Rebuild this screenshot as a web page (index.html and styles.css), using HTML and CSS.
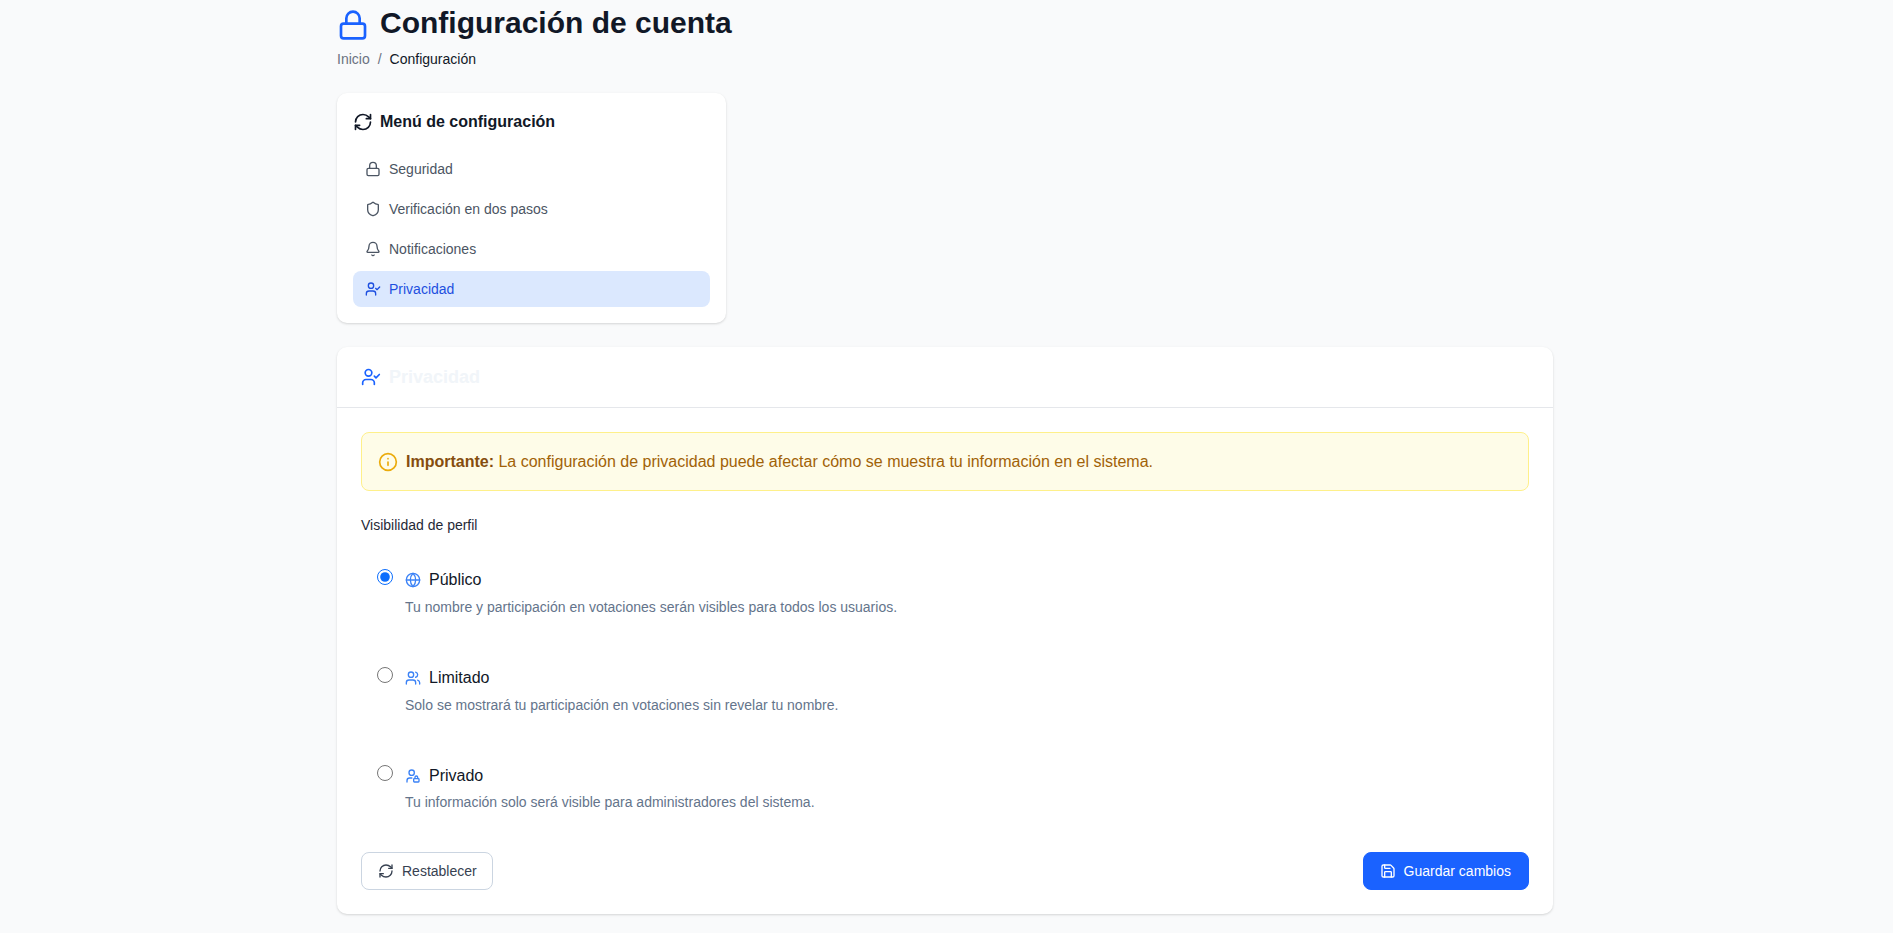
FILE: index.html
```html
<!DOCTYPE html>
<html lang="es">

<head>
    <meta charset="UTF-8">
    <meta name="viewport" content="width=device-width, initial-scale=1.0">
    <title>Configuración de cuenta</title>
    <link rel="stylesheet" href="styles.css">
</head>

<body>

    <div class="page">
        <h1 class="page-title">
            <svg class="icon icon-title" viewBox="0 0 24 24"><rect x="3" y="11" width="18" height="11" rx="2" ry="2"/><path d="M7 11V7a5 5 0 0 1 10 0v4"/></svg>
            Configuración de cuenta
        </h1>
        <div class="breadcrumb">
            <a href="#">Inicio</a>
            <span class="sep">/</span>
            <span class="current">Configuración</span>
        </div>

        <!-- Menu lateral -->
        <div class="card menu-card">
            <h2 class="menu-title">
                <svg class="icon icon-menu" viewBox="0 0 24 24"><path d="M3 12a9 9 0 0 1 9-9 9.75 9.75 0 0 1 6.74 2.74L21 8"/><path d="M21 3v5h-5"/><path d="M21 12a9 9 0 0 1-9 9 9.75 9.75 0 0 1-6.74-2.74L3 16"/><path d="M8 16H3v5"/></svg>
                Menú de configuración
            </h2>
            <nav class="menu-list">
                <a href="#" class="menu-item">
                    <svg class="icon" viewBox="0 0 24 24"><rect x="3" y="11" width="18" height="11" rx="2" ry="2"/><path d="M7 11V7a5 5 0 0 1 10 0v4"/></svg>
                    Seguridad
                </a>
                <a href="#" class="menu-item">
                    <svg class="icon" viewBox="0 0 24 24"><path d="M20 13c0 5-3.5 7.5-7.66 8.95a1 1 0 0 1-.67-.01C7.5 20.5 4 18 4 13V6a1 1 0 0 1 1-1c2 0 4.5-1.2 6.24-2.72a1.17 1.17 0 0 1 1.52 0C14.51 3.81 17 5 19 5a1 1 0 0 1 1 1z"/></svg>
                    Verificación en dos pasos
                </a>
                <a href="#" class="menu-item">
                    <svg class="icon" viewBox="0 0 24 24"><path d="M10.268 21a2 2 0 0 0 3.464 0"/><path d="M3.262 15.326A1 1 0 0 0 4 17h16a1 1 0 0 0 .74-1.673C19.41 13.956 18 12.499 18 8A6 6 0 0 0 6 8c0 4.499-1.411 5.956-2.738 7.326"/></svg>
                    Notificaciones
                </a>
                <a href="#" class="menu-item active">
                    <svg class="icon" viewBox="0 0 24 24"><path d="M16 21v-2a4 4 0 0 0-4-4H6a4 4 0 0 0-4 4v2"/><circle cx="9" cy="7" r="4"/><polyline points="16 11 18 13 22 9"/></svg>
                    Privacidad
                </a>
            </nav>
        </div>

        <!-- Panel de privacidad -->
        <div class="card panel">
            <div class="panel-header">
                <svg class="icon icon-panel" viewBox="0 0 24 24"><path d="M16 21v-2a4 4 0 0 0-4-4H6a4 4 0 0 0-4 4v2"/><circle cx="9" cy="7" r="4"/><polyline points="16 11 18 13 22 9"/></svg>
                <h3>Privacidad</h3>
            </div>
            <div class="panel-body">
                <div class="alert">
                    <svg class="icon icon-alert" viewBox="0 0 24 24"><circle cx="12" cy="12" r="10"/><path d="M12 16v-4"/><path d="M12 8h.01"/></svg>
                    <p><strong>Importante:</strong> La configuración de privacidad puede afectar cómo se muestra tu información en el sistema.</p>
                </div>

                <div class="field-label">Visibilidad de perfil</div>

                <label class="option">
                    <input type="radio" name="visibility" checked>
                    <span class="option-text">
                        <span class="option-title">
                            <svg class="icon icon-option" viewBox="0 0 24 24"><circle cx="12" cy="12" r="10"/><path d="M12 2a14.5 14.5 0 0 0 0 20 14.5 14.5 0 0 0 0-20"/><path d="M2 12h20"/></svg>
                            Público
                        </span>
                        <span class="option-desc">Tu nombre y participación en votaciones serán visibles para todos los usuarios.</span>
                    </span>
                </label>

                <label class="option">
                    <input type="radio" name="visibility">
                    <span class="option-text">
                        <span class="option-title">
                            <svg class="icon icon-option" viewBox="0 0 24 24"><path d="M16 21v-2a4 4 0 0 0-4-4H6a4 4 0 0 0-4 4v2"/><circle cx="9" cy="7" r="4"/><path d="M22 21v-2a4 4 0 0 0-3-3.87"/><path d="M16 3.13a4 4 0 0 1 0 7.75"/></svg>
                            Limitado
                        </span>
                        <span class="option-desc">Solo se mostrará tu participación en votaciones sin revelar tu nombre.</span>
                    </span>
                </label>

                <label class="option">
                    <input type="radio" name="visibility">
                    <span class="option-text">
                        <span class="option-title">
                            <svg class="icon icon-option" viewBox="0 0 24 24"><circle cx="10" cy="7" r="4"/><path d="M10.3 15H7a4 4 0 0 0-4 4v2"/><path d="M15 15.5V14a2 2 0 0 1 4 0v1.5"/><rect x="13" y="16" width="8" height="5" rx="1"/></svg>
                            Privado
                        </span>
                        <span class="option-desc">Tu información solo será visible para administradores del sistema.</span>
                    </span>
                </label>

                <div class="actions">
                    <button class="btn btn-outline">
                        <svg class="icon" viewBox="0 0 24 24"><path d="M3 12a9 9 0 0 1 9-9 9.75 9.75 0 0 1 6.74 2.74L21 8"/><path d="M21 3v5h-5"/><path d="M21 12a9 9 0 0 1-9 9 9.75 9.75 0 0 1-6.74-2.74L3 16"/><path d="M8 16H3v5"/></svg>
                        Restablecer
                    </button>
                    <button class="btn btn-primary">
                        <svg class="icon" viewBox="0 0 24 24"><path d="M15.2 3a2 2 0 0 1 1.4.6l3.8 3.8a2 2 0 0 1 .6 1.4V19a2 2 0 0 1-2 2H5a2 2 0 0 1-2-2V5a2 2 0 0 1 2-2z"/><path d="M17 21v-7a1 1 0 0 0-1-1H8a1 1 0 0 0-1 1v7"/><path d="M7 3v4a1 1 0 0 0 1 1h7"/></svg>
                        Guardar cambios
                    </button>
                </div>
            </div>
        </div>
    </div>

</body>

</html>
```

FILE: styles.css
```css
* {
    margin: 0;
    padding: 0;
    box-sizing: border-box;
}

body {
    font-family: "Liberation Sans", Arial, sans-serif;
    font-size: 16px;
    line-height: 24px;
    color: #111827;
    background-color: #f9fafb;
}

a {
    text-decoration: none;
    color: inherit;
}

.page {
    width: 1216px;
    margin-left: 337px;
    padding-top: 5px;
    padding-bottom: 19px;
}

.icon {
    flex: none;
    width: 16px;
    height: 16px;
    fill: none;
    stroke: currentColor;
    stroke-width: 2;
    stroke-linecap: round;
    stroke-linejoin: round;
}

.page-title {
    display: flex;
    align-items: center;
    gap: 11px;
    font-size: 30px;
    line-height: 36px;
    font-weight: 700;
    color: #111827;
}

.icon-title {
    width: 32px;
    height: 32px;
    margin-top: 4px;
    color: #1a62ff;
}

.breadcrumb {
    display: flex;
    gap: 8px;
    margin-top: 8px;
    font-size: 14px;
    line-height: 20px;
    color: #111827;
}

.breadcrumb a {
    color: #6b7280;
}

.breadcrumb .sep {
    color: #6b7280;
}

.card {
    background-color: #ffffff;
    border-radius: 10px;
    box-shadow: 0 1px 3px rgba(0, 0, 0, 0.1), 0 1px 2px rgba(0, 0, 0, 0.06);
}

.menu-card {
    width: 389px;
    margin-top: 24px;
    padding: 16px;
}

.menu-title {
    display: flex;
    align-items: center;
    gap: 7px;
    font-size: 16px;
    line-height: 26px;
    font-weight: 700;
    color: #111827;
}

.icon-menu {
    width: 20px;
    height: 20px;
}

.menu-list {
    display: flex;
    flex-direction: column;
    gap: 4px;
    margin-top: 16px;
}

.menu-item {
    display: flex;
    align-items: center;
    gap: 8px;
    height: 36px;
    padding: 0 12px;
    border-radius: 8px;
    font-size: 14px;
    color: #4b5563;
}

.menu-item.active {
    background-color: #dbe8fe;
    color: #1d4fe0;
}

.panel {
    margin-top: 24px;
}

.panel-header {
    display: flex;
    align-items: center;
    gap: 8px;
    height: 61px;
    padding: 0 24px;
    border-bottom: 1px solid #e5e7eb;
    color: #1a62ff;
}

.icon-panel {
    width: 20px;
    height: 20px;
}

.panel-header h3 {
    font-size: 18px;
    line-height: 28px;
    font-weight: 700;
    color: #f1f5f9;
}

.panel-body {
    padding: 24px;
}

.alert {
    display: flex;
    align-items: center;
    gap: 8px;
    height: 59px;
    padding: 0 16px;
    background-color: #fefce8;
    border: 1px solid #fef08a;
    border-radius: 8px;
    color: #a16207;
}

.alert strong {
    color: #854d0e;
}

.icon-alert {
    width: 20px;
    height: 20px;
    color: #ebab0b;
}

.field-label {
    margin-top: 24px;
    margin-bottom: 16.4px;
    font-size: 14px;
    line-height: 20px;
    color: #1f2937;
}

.option {
    display: flex;
    gap: 12px;
    padding: 16px;
    margin-bottom: 15.8px;
    cursor: pointer;
}

.option:last-of-type {
    margin-bottom: 0;
}

.option input {
    flex: none;
    width: 16px;
    height: 16px;
    margin-top: 2px;
    accent-color: #0d6efd;
}

.option-text {
    display: flex;
    flex-direction: column;
    gap: 3.8px;
}

.option-title {
    display: flex;
    align-items: center;
    gap: 8px;
    line-height: 26px;
    color: #111827;
}

.icon-option {
    color: #3b82f6;
}

.option-desc {
    font-size: 14px;
    line-height: 20px;
    color: #64748b;
}

.actions {
    display: flex;
    justify-content: space-between;
    margin-top: 23.6px;
}

.btn {
    display: flex;
    align-items: center;
    gap: 8px;
    height: 38px;
    padding: 0 16px;
    border-radius: 8px;
    font-family: inherit;
    font-size: 14px;
    font-weight: 400;
    cursor: pointer;
}

.btn-outline {
    padding-right: 15px;
    background-color: #ffffff;
    border: 1px solid #cbd5e1;
    color: #374151;
}

.btn-primary {
    padding-right: 17px;
    background-color: #1a62ff;
    border: 1px solid #1a62ff;
    color: #ffffff;
}
```
